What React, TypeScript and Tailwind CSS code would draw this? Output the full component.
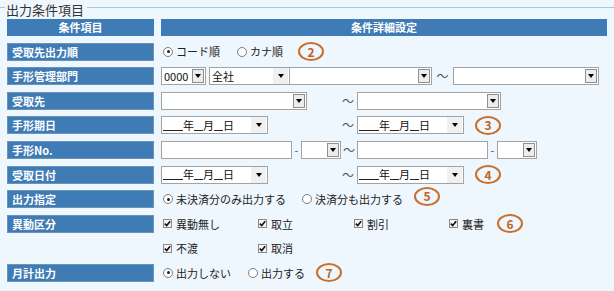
import React from "react";

const jp = "font-['Noto_Sans_CJK_JP','Noto_Sans',sans-serif]";

function Label({ text }: { text?: string }) {
  if (!text) return <div className="w-[147px] h-[18px] shrink-0" />;
  return (
    <div className="w-[147px] h-[18px] shrink-0 bg-[#3f7cb5] border border-[#6d92b3] text-white text-[11px] font-bold leading-[16px] pl-[4px]">
      {text}
    </div>
  );
}

function Arrow({ flat }: { flat?: boolean }) {
  return (
    <span
      className={`flex items-center justify-center shrink-0 ${
        flat ? "w-[15px] h-[16px] bg-[#f0f0f0]" : "w-[12px] h-[14px] bg-[#ececec] border border-[#8f8f8f]"
      }`}
    >
      <span className="w-0 h-0 border-l-[3px] border-r-[3px] border-t-[4px] border-l-transparent border-r-transparent border-t-black" />
    </span>
  );
}

function Select({ className, text, flat }: { className: string; text?: string; flat?: boolean }) {
  return (
    <div
      className={`h-[18px] bg-white border border-[#a3a3a3] flex items-center justify-between pl-[2px] pr-[1px] shrink-0 text-[11px] text-[#111] ${className}`}
    >
      <span>{text}</span>
      <Arrow flat={flat} />
    </div>
  );
}

function Input({ className }: { className: string }) {
  return <div className={`h-[18px] bg-white border border-[#a3a3a3] shrink-0 ${className}`} />;
}

function DateBox() {
  return (
    <div className="w-[107px] h-[18px] bg-white border border-[#a3a3a3] flex items-center pl-[1px] pr-[1px] shrink-0 text-[11px] text-[#111]">
      <span className="w-[20px] h-[11px] border-b border-[#222]" />
      <span>年</span>
      <span className="w-[9px] h-[11px] border-b border-[#222]" />
      <span>月</span>
      <span className="w-[9px] h-[11px] border-b border-[#222]" />
      <span>日</span>
      <span className="ml-auto">
        <Arrow flat />
      </span>
    </div>
  );
}

function Radio({ checked, text, className }: { checked?: boolean; text: string; className: string }) {
  return (
    <div className={`flex items-center shrink-0 ${className}`}>
      <span className="w-[10px] h-[10px] rounded-full border border-[#7d7d7d] bg-white flex items-center justify-center">
        {checked && <span className="w-[3px] h-[3px] rounded-full bg-[#222]" />}
      </span>
      <span className="ml-[3px] text-[11px] text-[#222]">{text}</span>
    </div>
  );
}

function Check({ text, className }: { text: string; className: string }) {
  return (
    <div className={`flex items-center shrink-0 ${className}`}>
      <span className="w-[9px] h-[9px] border border-[#8a8a8a] bg-[#f4f4f4] flex items-center justify-center">
        <svg width="7" height="7" viewBox="0 0 7 7">
          <path d="M0.8 3.6 L2.7 5.5 L6.2 1.2" stroke="#111" strokeWidth="1.6" fill="none" />
        </svg>
      </span>
      <span className="ml-[4px] text-[11px] text-[#222]">{text}</span>
    </div>
  );
}

function Num({ n, className }: { n: number; className?: string }) {
  return (
    <span
      className={`w-[26px] h-[19px] rounded-[50%] border-2 border-[#c8702c] text-[#c0621c] text-[12px] font-bold flex items-center justify-center leading-none shrink-0 ${className ?? ""}`}
    >
      {n}
    </span>
  );
}

function Tilde({ className }: { className: string }) {
  return <span className={`text-[12px] text-[#555] shrink-0 ${className}`}>～</span>;
}

function Row({ label, children }: { label?: string; children?: React.ReactNode }) {
  return (
    <div className="flex h-[18px]">
      <Label text={label} />
      <div className="ml-[7px] flex items-center h-[18px]">{children}</div>
    </div>
  );
}

export default function App() {
  return (
    <div className={`w-[614px] h-[291px] bg-[#eef7fd] overflow-hidden ${jp}`}>
      <div className="flex items-start h-[19px]">
        <span className="mt-[7px] w-[5px] h-px bg-[#9ccbe6]" />
        <span className="ml-[1px] text-[13px] leading-[19px] text-[#333]">出力条件項目</span>
        <span className="mt-[7px] ml-[3px] flex-1 h-px bg-[#9ccbe6]" />
      </div>
      <div className="pl-[7px] flex flex-col gap-[6.6px]">
        <div className="flex h-[17px]">
          <div className="w-[147px] h-[17px] bg-[#3f7cb5] text-white text-[11px] font-bold text-center leading-[17px]">
            条件項目
          </div>
          <div className="ml-[7px] w-[446px] h-[17px] bg-[#3f7cb5] text-white text-[11px] font-bold text-center leading-[17px]">
            条件詳細設定
          </div>
        </div>

        <Row label="受取先出力順">
          <Radio checked text="コード順" className="ml-[2px] w-[74px]" />
          <Radio text="カナ順" className="w-[61px]" />
          <Num n={2} />
        </Row>

        <Row label="手形管理部門">
          <Select className="w-[45px]" text="0000" />
          <Select className="ml-[3px] w-[80px] border-r-0" text="全社" flat />
          <Select className="w-[143px]" />
          <Tilde className="w-[21px] text-center" />
          <Select className="w-[146px]" />
        </Row>

        <Row label="受取先">
          <Select className="w-[146px]" />
          <Tilde className="w-[50px] text-right pr-[3px]" />
          <Select className="w-[144px]" />
        </Row>

        <Row label="手形期日">
          <DateBox />
          <Tilde className="w-[89px] text-right pr-[3px]" />
          <DateBox />
          <Num n={3} className="ml-[11px]" />
        </Row>

        <Row label="手形No.">
          <Input className="w-[131px]" />
          <span className="w-[9px] text-center text-[11px] text-[#555]">-</span>
          <Select className="w-[40px]" />
          <Tilde className="w-[16px] text-center" />
          <Input className="w-[131px]" />
          <span className="w-[9px] text-center text-[11px] text-[#555]">-</span>
          <Select className="w-[40px]" />
        </Row>

        <Row label="受取日付">
          <DateBox />
          <Tilde className="w-[89px] text-right pr-[3px]" />
          <DateBox />
          <Num n={4} className="ml-[11px]" />
        </Row>

        <Row label="出力指定">
          <Radio checked text="未決済分のみ出力する" className="ml-[2px] w-[139px]" />
          <Radio text="決済分も出力する" className="w-[112px]" />
          <Num n={5} className="-mt-[6px]" />
        </Row>

        <Row label="異動区分">
          <Check text="異動無し" className="ml-[2px] w-[95px]" />
          <Check text="取立" className="w-[96px]" />
          <Check text="割引" className="w-[95px]" />
          <Check text="裏書" className="w-[48px]" />
          <Num n={6} />
        </Row>

        <Row>
          <Check text="不渡" className="ml-[2px] w-[95px]" />
          <Check text="取消" className="w-[96px]" />
        </Row>

        <Row label="月計出力">
          <Radio checked text="出力しない" className="ml-[2px] w-[85px]" />
          <Radio text="出力する" className="w-[68px]" />
          <Num n={7} />
        </Row>
      </div>
    </div>
  );
}
